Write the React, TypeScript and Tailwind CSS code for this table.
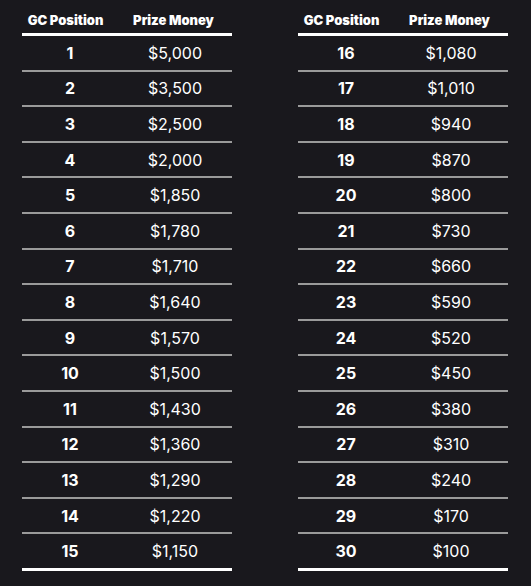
const left = [
  [1, "$5,000"], [2, "$3,500"], [3, "$2,500"], [4, "$2,000"], [5, "$1,850"],
  [6, "$1,780"], [7, "$1,710"], [8, "$1,640"], [9, "$1,570"], [10, "$1,500"],
  [11, "$1,430"], [12, "$1,360"], [13, "$1,290"], [14, "$1,220"], [15, "$1,150"],
] as const;

const right = [
  [16, "$1,080"], [17, "$1,010"], [18, "$940"], [19, "$870"], [20, "$800"],
  [21, "$730"], [22, "$660"], [23, "$590"], [24, "$520"], [25, "$450"],
  [26, "$380"], [27, "$310"], [28, "$240"], [29, "$170"], [30, "$100"],
] as const;

function PrizeTable({ rows }: { rows: readonly (readonly [number, string])[] }) {
  return (
    <div className="w-[210px]">
      <div className="grid h-[36px] grid-cols-[96px_114px] border-b-[3px] border-white text-[13px] font-black leading-[14px] text-white">
        <div className="pr-[9px] pt-[13px] text-center">GC Position</div>
        <div className="pr-[3px] pt-[13px] text-center">Prize Money</div>
      </div>
      {rows.map(([pos, prize], i) => (
        <div
          key={pos}
          className={
            i === rows.length - 1
              ? "grid h-[36.6px] grid-cols-[96px_114px] items-center border-b-[3px] border-white text-[16px] text-white"
              : "grid h-[35.6px] grid-cols-[96px_114px] items-center border-b-2 border-[#9a9a9a] text-[16px] text-white"
          }
        >
          <div className="text-center font-bold">{pos}</div>
          <div className="text-center">{prize}</div>
        </div>
      ))}
    </div>
  );
}

export default function App() {
  return (
    <div
      className="flex h-[586px] w-[531px] gap-[66px] bg-[#19181d] pl-[22px]"
      style={{ fontFamily: 'Inter, "Open Sans", sans-serif' }}
    >
      <PrizeTable rows={left} />
      <PrizeTable rows={right} />
    </div>
  );
}
